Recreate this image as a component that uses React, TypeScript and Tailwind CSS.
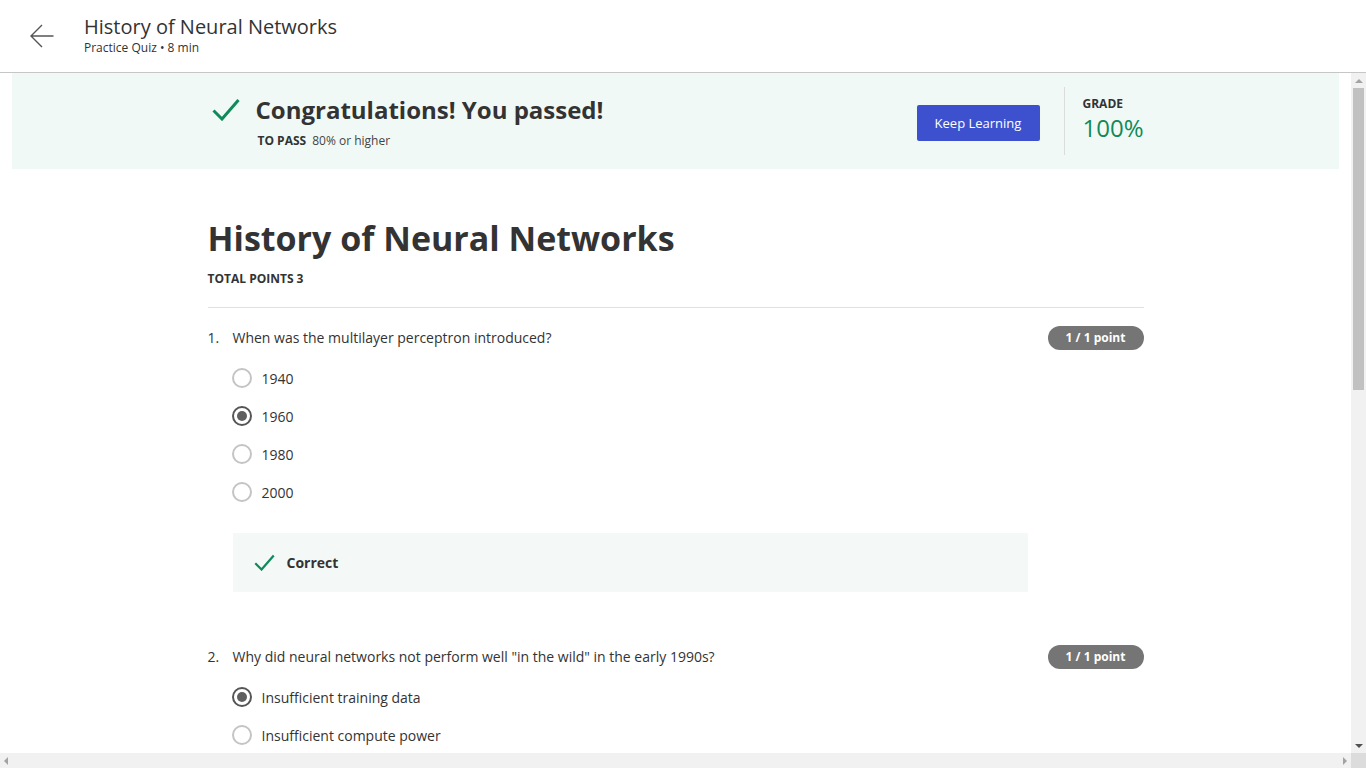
const font = { fontFamily: '"Open Sans", "Noto Sans", Arial, sans-serif' };

type Question = {
  n: number;
  text: string;
  options: string[];
  picked: number;
  feedback?: string;
};

const questions: Question[] = [
  {
    n: 1,
    text: "When was the multilayer perceptron introduced?",
    options: ["1940", "1960", "1980", "2000"],
    picked: 1,
    feedback: "Correct",
  },
  {
    n: 2,
    text: 'Why did neural networks not perform well "in the wild" in the early 1990s?',
    options: ["Insufficient training data", "Insufficient compute power"],
    picked: 0,
  },
];

function Check({ className }: { className?: string }) {
  return (
    <svg viewBox="0 0 28 23" className={className} fill="none">
      <path d="M1.5 12.5 L10 21 L26.5 2" stroke="#0f8a5a" strokeWidth="3" strokeLinecap="butt" strokeLinejoin="miter" />
    </svg>
  );
}

function Radio({ on }: { on: boolean }) {
  return on ? (
    <span className="w-[20px] h-[20px] rounded-full border-2 border-[#555] flex items-center justify-center flex-shrink-0">
      <span className="w-[10px] h-[10px] rounded-full bg-[#5f5f5f]" />
    </span>
  ) : (
    <span className="w-[20px] h-[20px] rounded-full border-2 border-[#c4c4c4] flex-shrink-0" />
  );
}

function QuestionBlock({ q }: { q: Question }) {
  return (
    <div className="mb-[53px]">
      <div className="flex items-center h-[24px]">
        <span className="w-[25px] text-[14px] text-[#333] -mt-[2px]">{q.n}.</span>
        <span className="flex-1 text-[14px] text-[#333] -mt-[2px]">{q.text}</span>
        <span className="h-[24px] w-[96px] rounded-full bg-[#757575] text-white text-[12px] font-bold flex items-center justify-center">
          1 / 1 point
        </span>
      </div>
      <div className="mt-[9px] pl-[24px]">
        {q.options.map((o, i) => (
          <div key={o} className="h-[38px] flex items-center gap-[10px]">
            <Radio on={i === q.picked} />
            <span className="text-[14px] text-[#333]">{o}</span>
          </div>
        ))}
      </div>
      {q.feedback && (
        <div className="mt-[22px] ml-[25px] w-[795px] h-[59px] bg-[#f4f9f7] flex items-center pl-[21px]">
          <Check className="w-[21px] h-[17px] mr-[12px]" />
          <span className="text-[14px] font-bold text-[#333]">{q.feedback}</span>
        </div>
      )}
    </div>
  );
}

export default function App() {
  return (
    <div className="h-[768px] w-full flex flex-col bg-white overflow-hidden" style={font}>
      {/* top bar */}
      <header className="h-[73px] flex-shrink-0 border-b border-[#c6c6c6] flex items-start pl-[30px]">
        <svg viewBox="0 0 24 24" className="w-[24px] h-[24px] mt-[24px]" fill="none">
          <path d="M23.5 12 H1 M12 1 L1 12 L12 23" stroke="#555" strokeWidth="1.4" />
        </svg>
        <div className="ml-[30px] pt-[14px]">
          <div className="text-[20px] leading-[26px] text-[#333]">History of Neural Networks</div>
          <div className="text-[12px] leading-[16px] text-[#333]">Practice Quiz • 8 min</div>
        </div>
      </header>

      <div className="flex-1 flex min-h-0">
        <main className="flex-1 overflow-hidden">
          {/* pass banner */}
          <div className="mx-[12px] h-[96px] bg-[#f1f9f6] flex justify-center">
            <div className="w-[936px] flex items-center justify-between">
              <div className="pl-[4px]">
                <div className="flex items-center">
                  <Check className="w-[28px] h-[23px] mr-[16px]" />
                  <span className="text-[24px] leading-[32px] font-bold text-[#333]">Congratulations! You passed!</span>
                </div>
                <div className="mt-[7px] pl-[46px] text-[12px] leading-[16px] text-[#333]">
                  <span className="font-bold">TO PASS</span>
                  <span className="ml-[6px] text-[#444]">80% or higher</span>
                </div>
              </div>
              <div className="flex items-center h-full">
                <button className="h-[36px] w-[123px] rounded-[2px] bg-[#3d51cf] text-white text-[13px] mt-[4px] pt-[2px]">
                  Keep Learning
                </button>
                <div className="ml-[24px] w-px h-[68px] bg-[#dcdcdc]" />
                <div className="ml-[18px] w-[61px] -mt-[4px]">
                  <div className="text-[12px] leading-[16px] font-bold text-[#333] mb-[1px]">GRADE</div>
                  <div className="text-[24px] leading-[30px] text-[#0f8a5a]">100%</div>
                </div>
              </div>
            </div>
          </div>

          {/* quiz body */}
          <div className="w-[936px] mx-auto pt-[47px]">
            <h1 className="text-[34px] leading-[44px] font-bold text-[#333]">History of Neural Networks</h1>
            <div className="mt-[11px] text-[12px] leading-[16px] font-bold text-[#333]">TOTAL POINTS 3</div>
            <div className="mt-[20px] h-px bg-[#e0e0e0]" />
            <div className="mt-[18px]">
              {questions.map((q) => (
                <QuestionBlock key={q.n} q={q} />
              ))}
            </div>
          </div>
        </main>

        {/* vertical scrollbar */}
        <div className="w-[15px] flex-shrink-0 bg-[#f1f1f1] flex flex-col items-center">
          <div className="h-[15px] flex items-center justify-center">
            <span className="w-0 h-0 border-l-[4px] border-r-[4px] border-b-[4px] border-l-transparent border-r-transparent border-b-[#a3a3a3]" />
          </div>
          <div className="w-[11px] h-[302px] bg-[#c1c1c1]" />
          <div className="flex-1" />
          <div className="h-[15px] flex items-center justify-center">
            <span className="w-0 h-0 border-l-[4px] border-r-[4px] border-t-[4px] border-l-transparent border-r-transparent border-t-[#505050]" />
          </div>
        </div>
      </div>

      {/* horizontal scrollbar */}
      <div className="h-[15px] flex-shrink-0 flex">
        <div className="flex-1 bg-[#f1f1f1] flex items-center justify-between px-[4px]">
          <span className="w-0 h-0 border-t-[4px] border-b-[4px] border-r-[4px] border-t-transparent border-b-transparent border-r-[#a3a3a3]" />
          <span className="w-0 h-0 border-t-[4px] border-b-[4px] border-l-[4px] border-t-transparent border-b-transparent border-l-[#a3a3a3]" />
        </div>
        <div className="w-[15px] bg-[#dcdcdc]" />
      </div>
    </div>
  );
}
